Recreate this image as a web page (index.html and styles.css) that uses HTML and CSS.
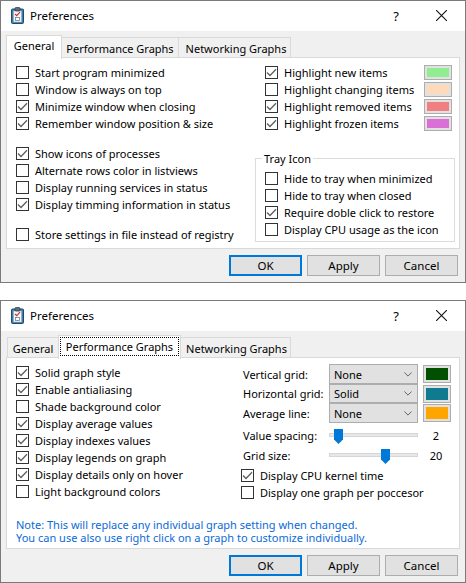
FILE: index.html
```html
<!DOCTYPE html>
<html lang="en">
<head>
<meta charset="utf-8">
<title>Preferences</title>
<link rel="stylesheet" href="styles.css">
</head>
<body>
<svg class="defs" width="0" height="0" aria-hidden="true">
  <symbol id="tick" viewBox="0 0 11 11"><path d="M1 5.5 L4 8.5 L10 2.2" fill="none" stroke="#5f5f5f" stroke-width="1.3"/></symbol>
  <symbol id="clip" viewBox="0 0 14 17">
    <rect x="0.5" y="2" width="12" height="14.5" rx="1" fill="#3d7fa8" stroke="#1d4a70"/>
    <rect x="2.5" y="4" width="8" height="11" fill="#f6f6f6" stroke="#8fa8b8" stroke-width="0.5"/>
    <rect x="4" y="0.5" width="5" height="3.5" rx="1" fill="#5b6f80" stroke="#2a3a48" stroke-width="0.7"/>
    <path d="M4 7 L5.7 8.7 L9 5.2" fill="none" stroke="#c8323a" stroke-width="1.2"/>
    <rect x="4.5" y="10.5" width="4" height="3" fill="#fff" stroke="#6f7f8f" stroke-width="0.8"/>
  </symbol>
  <symbol id="chev" viewBox="0 0 10 6"><path d="M0.5 0.5 L5 5 L9.5 0.5" fill="none" stroke="#444" stroke-width="1"/></symbol>
  <symbol id="cross" viewBox="0 0 10 10"><path d="M0 0 L10 10 M10 0 L0 10" fill="none" stroke="#111" stroke-width="1"/></symbol>
</svg>

<section class="window">
  <header class="titlebar">
    <svg class="app-icon"><use href="#clip"/></svg>
    <span class="title">Preferences</span>
    <span class="help">?</span>
    <svg class="close"><use href="#cross"/></svg>
  </header>
  <div class="content">
    <nav class="tabs">
      <span class="tab tab-general active">General</span>
      <span class="tab tab-perf">Performance Graphs</span>
      <span class="tab tab-net">Networking Graphs</span>
    </nav>
    <div class="page">
      <div class="columns">
        <div class="col-left">
          <div class="group">
            <label class="check"><span class="box"></span>Start program minimized</label>
            <label class="check"><span class="box"></span>Window is always on top</label>
            <label class="check"><span class="box"><svg><use href="#tick"/></svg></span>Minimize window when closing</label>
            <label class="check"><span class="box"><svg><use href="#tick"/></svg></span>Remember window position &amp; size</label>
          </div>
          <div class="group">
            <label class="check"><span class="box"><svg><use href="#tick"/></svg></span>Show icons of processes</label>
            <label class="check"><span class="box"></span>Alternate rows color in listviews</label>
            <label class="check"><span class="box"></span>Display running services in status</label>
            <label class="check"><span class="box"><svg><use href="#tick"/></svg></span>Display timming information in status</label>
          </div>
          <div class="group">
            <label class="check"><span class="box"></span>Store settings in file instead of registry</label>
          </div>
        </div>
        <div class="col-right">
          <div class="highlights">
            <div class="hl-row"><label class="check"><span class="box"><svg><use href="#tick"/></svg></span>Highlight new items</label><span class="swatch swatch-new"></span></div>
            <div class="hl-row"><label class="check"><span class="box"></span>Highlight changing items</label><span class="swatch swatch-changing"></span></div>
            <div class="hl-row"><label class="check"><span class="box"><svg><use href="#tick"/></svg></span>Highlight removed items</label><span class="swatch swatch-removed"></span></div>
            <div class="hl-row"><label class="check"><span class="box"><svg><use href="#tick"/></svg></span>Highlight frozen items</label><span class="swatch swatch-frozen"></span></div>
          </div>
          <fieldset class="tray">
            <legend>Tray Icon</legend>
            <label class="check"><span class="box"></span>Hide to tray when minimized</label>
            <label class="check"><span class="box"></span>Hide to tray when closed</label>
            <label class="check"><span class="box"><svg><use href="#tick"/></svg></span>Require doble click to restore</label>
            <label class="check"><span class="box"></span>Display CPU usage as the icon</label>
          </fieldset>
        </div>
      </div>
    </div>
    <footer class="buttons">
      <button class="btn default">OK</button>
      <button class="btn">Apply</button>
      <button class="btn">Cancel</button>
    </footer>
  </div>
</section>

<section class="window">
  <header class="titlebar">
    <svg class="app-icon"><use href="#clip"/></svg>
    <span class="title">Preferences</span>
    <span class="help">?</span>
    <svg class="close"><use href="#cross"/></svg>
  </header>
  <div class="content">
    <nav class="tabs tabs-second">
      <span class="tab tab-general2">General</span>
      <span class="tab tab-perf2 active"><span class="focus">Performance Graphs</span></span>
      <span class="tab tab-net2">Networking Graphs</span>
    </nav>
    <div class="page page-graphs">
      <div class="columns">
        <div class="col-left-graphs">
          <label class="check"><span class="box"><svg><use href="#tick"/></svg></span>Solid graph style</label>
          <label class="check"><span class="box"><svg><use href="#tick"/></svg></span>Enable antialiasing</label>
          <label class="check"><span class="box"></span>Shade background color</label>
          <label class="check"><span class="box"><svg><use href="#tick"/></svg></span>Display average values</label>
          <label class="check"><span class="box"><svg><use href="#tick"/></svg></span>Display indexes values</label>
          <label class="check"><span class="box"><svg><use href="#tick"/></svg></span>Display legends on graph</label>
          <label class="check"><span class="box"><svg><use href="#tick"/></svg></span>Display details only on hover</label>
          <label class="check"><span class="box"></span>Light background colors</label>
        </div>
        <div class="col-right-graphs">
          <div class="combo-grid">
            <span class="field-label">Vertical grid:</span>
            <span class="combo">None<svg><use href="#chev"/></svg></span>
            <span class="swatch swatch-tall swatch-green"></span>
            <span class="field-label">Horizontal grid:</span>
            <span class="combo">Solid<svg><use href="#chev"/></svg></span>
            <span class="swatch swatch-tall swatch-teal"></span>
            <span class="field-label">Average line:</span>
            <span class="combo">None<svg><use href="#chev"/></svg></span>
            <span class="swatch swatch-tall swatch-orange"></span>
          </div>
          <div class="slider-grid">
            <span class="field-label">Value spacing:</span>
            <span class="slider"><span class="thumb thumb-low"></span></span>
            <span class="value">2</span>
            <span class="field-label">Grid size:</span>
            <span class="slider"><span class="thumb thumb-high"></span></span>
            <span class="value">20</span>
          </div>
          <div class="graph-checks">
            <label class="check"><span class="box"><svg><use href="#tick"/></svg></span>Display CPU kernel time</label>
            <label class="check"><span class="box"></span>Display one graph per poccesor</label>
          </div>
        </div>
      </div>
      <p class="note">Note: This will replace any individual graph setting when changed.<br>You can use also use right click on a graph to customize individually.</p>
    </div>
    <footer class="buttons">
      <button class="btn default">OK</button>
      <button class="btn">Apply</button>
      <button class="btn">Cancel</button>
    </footer>
  </div>
</section>
</body>
</html>
```
FILE: styles.css
```css
* { box-sizing: border-box; }
html, body { margin: 0; padding: 0; background: #fff; }
body {
  width: 466px;
  height: 583px;
  overflow: hidden;
  font-family: "Noto Sans", "Open Sans", sans-serif;
  font-size: 11px;
  color: #000;
}
.defs { display: block; height: 0; }

.window {
  width: 466px;
  height: 283px;
  border: 1px solid #7a7a7a;
  background: #f0f0f0;
  display: flex;
  flex-direction: column;
  margin-bottom: 17px;
}
.window:last-of-type { margin-bottom: 0; }

.titlebar {
  height: 30px;
  background: #fff;
  display: flex;
  align-items: center;
  padding: 0 0 1px 10px;
  flex: none;
}
.app-icon { width: 14px; height: 17px; flex: none; }
.title { margin-left: 5px; font-size: 11.5px; }
.help { margin-left: auto; font-size: 13px; width: 12px; text-align: center; }
.close { width: 11px; height: 11px; margin-left: 34px; margin-right: 18px; flex: none; }

.content { flex: 1; padding: 0 5px; display: flex; flex-direction: column; }

.tabs { display: flex; align-items: flex-end; height: 23px; margin-top: 4px; margin-bottom: -1px; flex: none; }
.tabs-second { padding-left: 1px; }
.tab {
  height: 21px;
  background: #f0f0f0;
  border: 1px solid #d9d9d9;
  border-bottom: 0;
  margin-left: -1px;
  display: flex;
  align-items: center;
  justify-content: center;
  white-space: nowrap;
}
.tab:first-child { margin-left: 0; }
.tab.active { height: 24px; background: #fff; margin-bottom: -1px; z-index: 1; padding-bottom: 4px; }
.tab-general { width: 56px; }
.tab-perf { width: 118px; }
.tab-net { width: 113px; padding-left: 3px; }
.tab-general2 { width: 52px; }
.tab-perf2 { width: 123px; }
.tab-net2 { width: 111px; padding-left: 2px; }
.focus { border: 1px dotted #000; width: 119px; height: 19px; display: flex; align-items: center; justify-content: center; margin-top: 1px; }

.page {
  height: 192px;
  background: #fff;
  border: 1px solid #d9d9d9;
  flex: none;
  display: flex;
  flex-direction: column;
}
.columns { display: flex; }

.check { display: flex; align-items: center; height: 17px; white-space: nowrap; }
.box {
  width: 13px;
  height: 13px;
  border: 1px solid #333;
  background: #fff;
  margin-right: 6px;
  flex: none;
  display: flex;
}
.box svg { width: 11px; height: 11px; }

.col-left { width: 248px; padding: 6px 0 0 9px; flex: none; }
.group + .group { margin-top: 13px; }

.col-right { width: 200px; padding-top: 6px; flex: none; }
.highlights { padding: 0 3px 0 10px; }
.hl-row { display: flex; align-items: center; justify-content: space-between; height: 17px; }

.swatch { display: block; width: 28px; height: 15px; border: 1px solid #adadad; box-shadow: inset 0 0 0 2px #e1e1e1; flex: none; }
.swatch-tall { height: 18px; align-self: center; }
.swatch-new { background: #90ee90; }
.swatch-changing { background: #ffdab9; }
.swatch-removed { background: #f08080; }
.swatch-frozen { background: #da70d6; }
.swatch-green { background: #005000; }
.swatch-teal { background: #0f7a90; }
.swatch-orange { background: #ffa500; }

.tray {
  margin: 18px 0 0;
  width: 200px;
  padding: 3px 0 3px 9px;
  border: 1px solid #dcdcdc;
  min-width: 0;
}
.tray legend { padding: 0 2px; margin-left: -3px; height: 17px; line-height: 17px; }

.page-graphs { justify-content: space-between; }
.col-left-graphs { width: 234px; padding: 6px 0 0 9px; flex: none; }
.col-right-graphs { padding-top: 6px; flex: none; }

.combo-grid { display: grid; grid-template-columns: 88px 89px 33px; grid-template-rows: 20px 19px 20px; align-items: center; }
.field-label { padding-left: 2px; white-space: nowrap; }
.combo {
  height: 100%;
  border: 1px solid #adadad;
  background: #e1e1e1;
  display: flex;
  align-items: center;
  justify-content: space-between;
  padding: 0 5px 0 4px;
}
.combo svg { width: 8px; height: 5px; }
.combo-grid .swatch { justify-self: end; }

.slider-grid { display: grid; grid-template-columns: 88px 89px 36px; grid-auto-rows: 20px; align-items: center; margin-top: 2px; }
.slider { display: block; position: relative; height: 4px; background: #e7e7e7; border: 1px solid #d6d6d6; }
.thumb { position: absolute; top: -5px; width: 9px; height: 15px; background: #0078d7; clip-path: polygon(0 0, 100% 0, 100% 70%, 50% 100%, 0 70%); }
.thumb-low { left: 4px; }
.thumb-high { left: 51px; }
.value { text-align: center; }

.graph-checks { margin-top: 2px; }

.note { margin: 0 0 4px 9px; color: #0a6ad8; line-height: 13px; white-space: nowrap; }

.buttons { display: flex; justify-content: flex-end; gap: 5px; padding: 6px 2px 0 0; flex: none; }
.btn {
  width: 73px;
  height: 21px;
  padding: 0;
  font: inherit;
  font-size: 11.5px;
  color: #000;
  background: #e1e1e1;
  border: 1px solid #adadad;
  border-radius: 0;
}
.btn.default { border: 2px solid #0078d7; }
```
